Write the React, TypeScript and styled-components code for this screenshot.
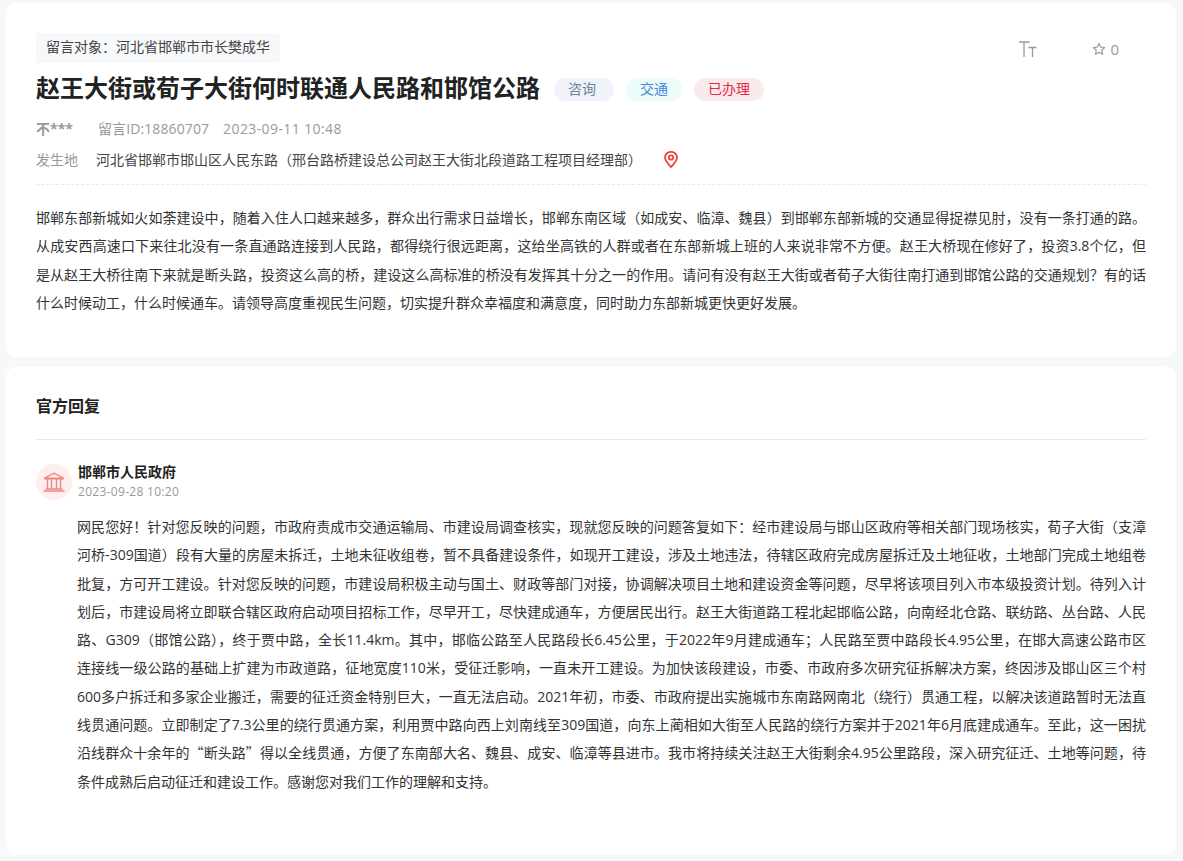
import React from "react"
import styled, { createGlobalStyle } from "styled-components"

const GlobalStyle = createGlobalStyle`
    * { box-sizing: border-box; }
    html, body { margin: 0; padding: 0; background: #f7f8fa; }
    body {
        font-family: "Open Sans", "Noto Sans CJK SC", sans-serif;
        color: #333;
    }
`

const Page = styled.main`
    padding: 3px 7px 6px 6px;
    display: flex;
    flex-direction: column;
    gap: 10px;
`

const Card = styled.section<{ $height: number }>`
    background: #fff;
    border-radius: 10px;
    height: ${props => props.$height}px;
    padding: 0 30px;
`

const Header = styled.div`
    position: relative;
    padding-top: 30px;
`

const Target = styled.div`
    display: inline-block;
    height: 30px;
    line-height: 28px;
    padding: 0 10px;
    font-size: 14px;
    color: #444;
    background: #f7f8fa;
    border-radius: 2px;
`

const Tools = styled.div`
    position: absolute;
    top: 36px;
    right: 27px;
    display: flex;
    align-items: center;
    gap: 55px;
    color: #999;
    font-size: 15px;
`

const Count = styled.span`
    display: flex;
    align-items: center;
    gap: 4px;
`

const TitleRow = styled.div`
    display: flex;
    align-items: center;
    margin-top: 8px;
    height: 36px;
`

const Title = styled.h1`
    margin: 0 14px 0 0;
    padding-bottom: 2px;
    font-size: 24px;
    font-weight: 700;
    color: #222;
    line-height: 34px;
`

const tagColors = {
    gray: { bg: "#f0f3f9", fg: "#6d82a3", end: 18 },
    cyan: { bg: "#ecfcfa", fg: "#3f86d8", end: 14 },
    red: { bg: "#fbeaec", fg: "#e5294a", end: 14 },
}

const Tag = styled.span<{ $kind: keyof typeof tagColors }>`
    height: 23px;
    line-height: 22px;
    padding: 0 ${props => tagColors[props.$kind].end}px 0 14px;
    margin-right: 12px;
    border-radius: 12px;
    font-size: 14px;
    background: ${props => tagColors[props.$kind].bg};
    color: ${props => tagColors[props.$kind].fg};
`

const Meta = styled.div`
    display: flex;
    align-items: center;
    margin-top: 10px;
    height: 22px;
    font-size: 14px;
    color: #999;
`

const Author = styled.span`
    font-weight: 700;
    width: 62px;
`

const Stamp = styled.span`
    margin-right: 14px;
    letter-spacing: 0.1px;
`

const Time = styled.span`
    letter-spacing: 0.4px;
`

const Place = styled.div`
    display: flex;
    align-items: center;
    margin-top: 9px;
    height: 22px;
    font-size: 14px;
    color: #999;
`

const PlaceLabel = styled.span`
    width: 60px;
`

const PlaceName = styled.span`
    color: #444;
    margin-right: 22px;
`

const Divider = styled.div`
    margin-top: 14px;
    border-top: 1px dashed #e8e8e8;
`

const Body = styled.p`
    margin: 19px 0 0;
    font-size: 14px;
    line-height: 28.3px;
    color: #333;
    text-align: justify;
`

const SectionTitle = styled.h2`
    margin: 0;
    height: 73px;
    line-height: 79px;
    font-size: 16px;
    font-weight: 700;
    color: #222;
    border-bottom: 1px solid #e8e8e8;
`

const Reply = styled.div`
    display: flex;
    align-items: flex-start;
    gap: 6px;
    margin-top: 22px;
`

const Avatar = styled.div`
    width: 36px;
    height: 36px;
    margin-top: 2px;
    border-radius: 50%;
    background: #feeeee;
    display: flex;
    align-items: center;
    justify-content: center;
`

const ReplyName = styled.div`
    font-size: 14px;
    font-weight: 700;
    color: #222;
    line-height: 20px;
`

const ReplyDate = styled.div`
    font-size: 12px;
    letter-spacing: 0.3px;
    color: #999;
    line-height: 20px;
`

const ReplyBody = styled.div`
    margin: 11px 0 0 41px;
    font-size: 14px;
    line-height: 28.3px;
    color: #333;
`

// the reply wraps at fixed places in the original, each row is stretched to full width
const ReplyLine = styled.div<{ $last?: boolean }>`
    height: 28.3px;
    white-space: nowrap;
    text-align: justify;
    text-align-last: ${props => (props.$last ? "left" : "justify")};
`

const Quote = styled.span`
    font-family: "Noto Sans CJK SC", sans-serif;
    line-height: 1;
`

const TextSizeIcon = () => (
    <svg width="18" height="16" viewBox="0 0 18 16" fill="none" stroke="#999" strokeWidth="1.3">
        <path d="M0 1h10.500M5 1v15M9.500 6.500h8M13.500 6.500v9.500" />
    </svg>
)

const StarIcon = () => (
    <svg width="14" height="14" viewBox="0 0 24 24" fill="none" stroke="#999" strokeWidth="2" strokeLinejoin="round">
        <path d="M12 2.500l2.900 6.200 6.800.8-5 4.700 1.300 6.800-6-3.400-6 3.400 1.300-6.800-5-4.700 6.800-.8z" />
    </svg>
)

const PinIcon = () => (
    <svg width="14" height="17" viewBox="0 0 14 17" fill="none" stroke="#f0413c" strokeWidth="1.8">
        <path d="M7 16C4 12.800 1 10 1 6.600a6 5.800 0 0 1 12 0C13 10 10 12.800 7 16z" />
        <circle cx="7" cy="6.500" r="2.200" />
    </svg>
)

const BankIcon = () => (
    <svg width="22" height="20" viewBox="0 0 22 20" fill="none" stroke="#ee8583" strokeWidth="1.4">
        <path d="M1.500 6.200L11 1.200l9.500 5zM1 6.700h20M4.500 7v10M8.500 7v10M13.500 7v10M17.500 7v10M2.500 17h17M0.500 19h21" />
    </svg>
)

const App: React.FC = () => {
    return (
        <Page>
            <GlobalStyle />
            <Card $height={354}>
                <Header>
                    <Target>留言对象：河北省邯郸市市长樊成华</Target>
                    <Tools>
                        <TextSizeIcon />
                        <Count><StarIcon />0</Count>
                    </Tools>
                </Header>
                <TitleRow>
                    <Title>赵王大街或荀子大街何时联通人民路和邯馆公路</Title>
                    <Tag $kind="gray">咨询</Tag>
                    <Tag $kind="cyan">交通</Tag>
                    <Tag $kind="red">已办理</Tag>
                </TitleRow>
                <Meta>
                    <Author>不***</Author>
                    <Stamp>留言ID:18860707</Stamp>
                    <Time>2023-09-11 10:48</Time>
                </Meta>
                <Place>
                    <PlaceLabel>发生地</PlaceLabel>
                    <PlaceName>河北省邯郸市邯山区人民东路（邢台路桥建设总公司赵王大街北段道路工程项目经理部）</PlaceName>
                    <PinIcon />
                </Place>
                <Divider />
                <Body>
                    邯郸东部新城如火如荼建设中，随着入住人口越来越多，群众出行需求日益增长，邯郸东南区域（如成安、临漳、魏县）到邯郸东部新城的交通显得捉襟见肘，没有一条打通的路。从成安西高速口下来往北没有一条直通路连接到人民路，都得绕行很远距离，这给坐高铁的人群或者在东部新城上班的人来说非常不方便。赵王大桥现在修好了，投资3.8个亿，但是从赵王大桥往南下来就是断头路，投资这么高的桥，建设这么高标准的桥没有发挥其十分之一的作用。请问有没有赵王大街或者荀子大街往南打通到邯馆公路的交通规划？有的话什么时候动工，什么时候通车。请领导高度重视民生问题，切实提升群众幸福度和满意度，同时助力东部新城更快更好发展。
                </Body>
            </Card>
            <Card $height={488}>
                <SectionTitle>官方回复</SectionTitle>
                <Reply>
                    <Avatar><BankIcon /></Avatar>
                    <div>
                        <ReplyName>邯郸市人民政府</ReplyName>
                        <ReplyDate>2023-09-28 10:20</ReplyDate>
                    </div>
                </Reply>
                <ReplyBody>
                    <ReplyLine>网民您好！针对您反映的问题，市政府责成市交通运输局、市建设局调查核实，现就您反映的问题答复如下：经市建设局与邯山区政府等相关部门现场核实，荀子大街（支漳</ReplyLine>
                    <ReplyLine>河桥-309国道）段有大量的房屋未拆迁，土地未征收组卷，暂不具备建设条件，如现开工建设，涉及土地违法，待辖区政府完成房屋拆迁及土地征收，土地部门完成土地组卷</ReplyLine>
                    <ReplyLine>批复，方可开工建设。针对您反映的问题，市建设局积极主动与国土、财政等部门对接，协调解决项目土地和建设资金等问题，尽早将该项目列入市本级投资计划。待列入计</ReplyLine>
                    <ReplyLine>划后，市建设局将立即联合辖区政府启动项目招标工作，尽早开工，尽快建成通车，方便居民出行。赵王大街道路工程北起邯临公路，向南经北仓路、联纺路、丛台路、人民</ReplyLine>
                    <ReplyLine>路、G309（邯馆公路），终于贾中路，全长11.4km。其中，邯临公路至人民路段长6.45公里，于2022年9月建成通车；人民路至贾中路段长4.95公里，在邯大高速公路市区</ReplyLine>
                    <ReplyLine>连接线一级公路的基础上扩建为市政道路，征地宽度110米，受征迁影响，一直未开工建设。为加快该段建设，市委、市政府多次研究征拆解决方案，终因涉及邯山区三个村</ReplyLine>
                    <ReplyLine>600多户拆迁和多家企业搬迁，需要的征迁资金特别巨大，一直无法启动。2021年初，市委、市政府提出实施城市东南路网南北（绕行）贯通工程，以解决该道路暂时无法直</ReplyLine>
                    <ReplyLine>线贯通问题。立即制定了7.3公里的绕行贯通方案，利用贾中路向西上刘南线至309国道，向东上蔺相如大街至人民路的绕行方案并于2021年6月底建成通车。至此，这一困扰</ReplyLine>
                    <ReplyLine>沿线群众十余年的<Quote>“断头路”</Quote>得以全线贯通，方便了东南部大名、魏县、成安、临漳等县进市。我市将持续关注赵王大街剩余4.95公里路段，深入研究征迁、土地等问题，待</ReplyLine>
                    <ReplyLine $last>条件成熟后启动征迁和建设工作。感谢您对我们工作的理解和支持。</ReplyLine>
                </ReplyBody>
            </Card>
        </Page>
    )
}

export default App
